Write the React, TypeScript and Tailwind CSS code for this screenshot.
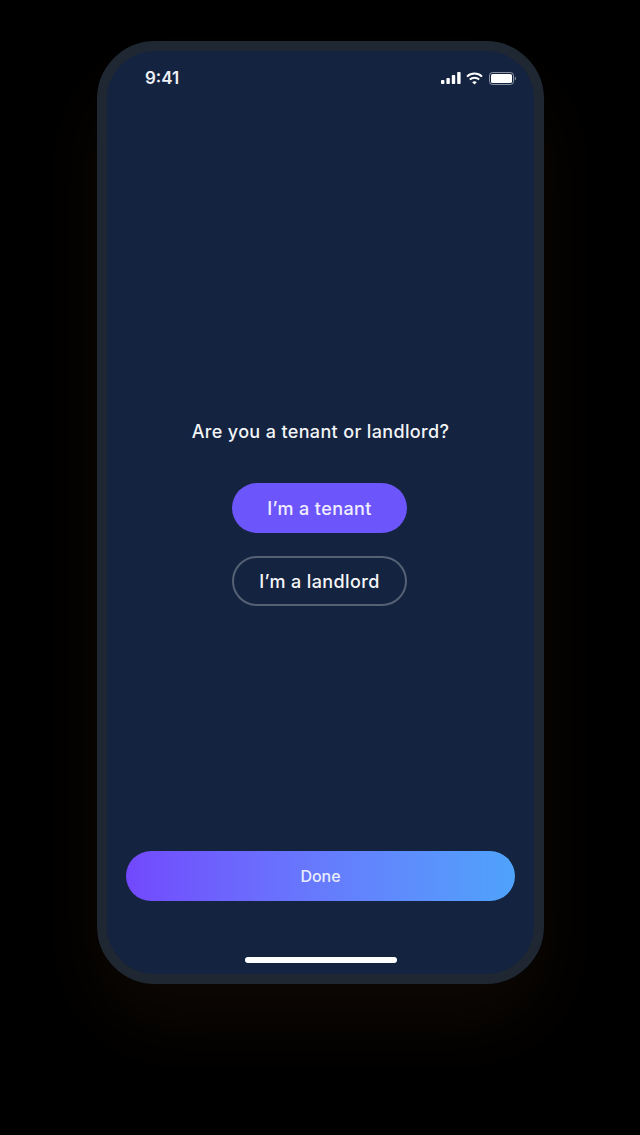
import React from 'react';

function StatusIcons() {
  return (
    <div className="flex items-center gap-[5px]">
      <svg width="20" height="12" viewBox="0 0 20 12" fill="#fff">
        <rect x="0" y="8" width="3.4" height="4" rx="0.8" />
        <rect x="5.4" y="6" width="3.4" height="6" rx="0.8" />
        <rect x="10.8" y="3" width="3.4" height="9" rx="0.8" />
        <rect x="16.2" y="0" width="3.4" height="12" rx="0.8" />
      </svg>
      <svg width="17" height="13" viewBox="0 0 17 13" fill="none" stroke="#fff" strokeWidth="2">
        <path d="M1 4.6C5.2 .6 11.8 .6 16 4.6" />
        <path d="M3.8 7.5C6.4 5.1 10.6 5.1 13.2 7.5" />
        <path d="M8.5 12.6 L6.2 10.2C7.5 9 9.5 9 10.8 10.2Z" fill="#fff" stroke="none" />
      </svg>
      <svg width="27" height="13" viewBox="0 0 27 13" fill="none" className="ml-[1px]">
        <rect x="0.5" y="0.5" width="24" height="12" rx="3" stroke="#fff" strokeOpacity="0.5" />
        <rect x="2" y="2" width="21" height="9" rx="1.6" fill="#fff" />
        <path d="M25.800 4.500v4c.7-.3 1.200-1.100 1.200-2s-.5-1.700-1.200-2Z" fill="#fff" fillOpacity="0.5" />
      </svg>
    </div>
  );
}

export default function App() {
  return (
    <div className="w-[640px] h-[1135px] overflow-hidden bg-black pt-[41px] pl-[97px] font-['Inter',sans-serif] text-white">
      <div className="w-[447px] h-[943px] rounded-[58px] border-[10px] border-[#1f2732] bg-[#14233f] shadow-[0_40px_80px_rgba(40,24,12,0.35)] flex flex-col">
        {/* Status bar */}
        <div className="flex items-center justify-between pl-[38px] pr-[18px] pt-[16px] h-[38px]">
          <span className="text-[17px] leading-[22px] font-semibold text-[#eef1f5]">9:41</span>
          <StatusIcons />
        </div>

        {/* Question */}
        <div className="flex flex-col items-center pr-[2px] pt-[330px]">
          <p className="text-[18px] leading-[24px] font-medium text-[#f2f4f7] tracking-[0.35px] ml-[2px] translate-y-[1px]">Are you a tenant or landlord?</p>
          <button className="mt-[40px] w-[175px] h-[50px] rounded-full bg-[#6c56fb] text-[18px] pt-[1px] font-medium tracking-[0.4px] text-[#f1efff]">I’m a tenant</button>
          <button className="mt-[23px] w-[175px] h-[50px] rounded-full border-2 border-[#566176] text-[18px] pt-[1px] font-medium tracking-[0.4px] text-[#f5f6f8]">I’m a landlord</button>
        </div>

        {/* Done + home bar */}
        <div className="mt-auto flex flex-col items-center pl-[19px] pr-[19px] pb-[11px]">
          <button className="w-[389px] h-[50px] rounded-full bg-gradient-to-r from-[#7248fd] to-[#4ea3fb] text-[16px] font-medium text-[#e9ecff]">Done</button>
          <div className="mt-[56px] w-[152px] h-[6px] rounded-full bg-white" />
        </div>
      </div>
    </div>
  );
}
